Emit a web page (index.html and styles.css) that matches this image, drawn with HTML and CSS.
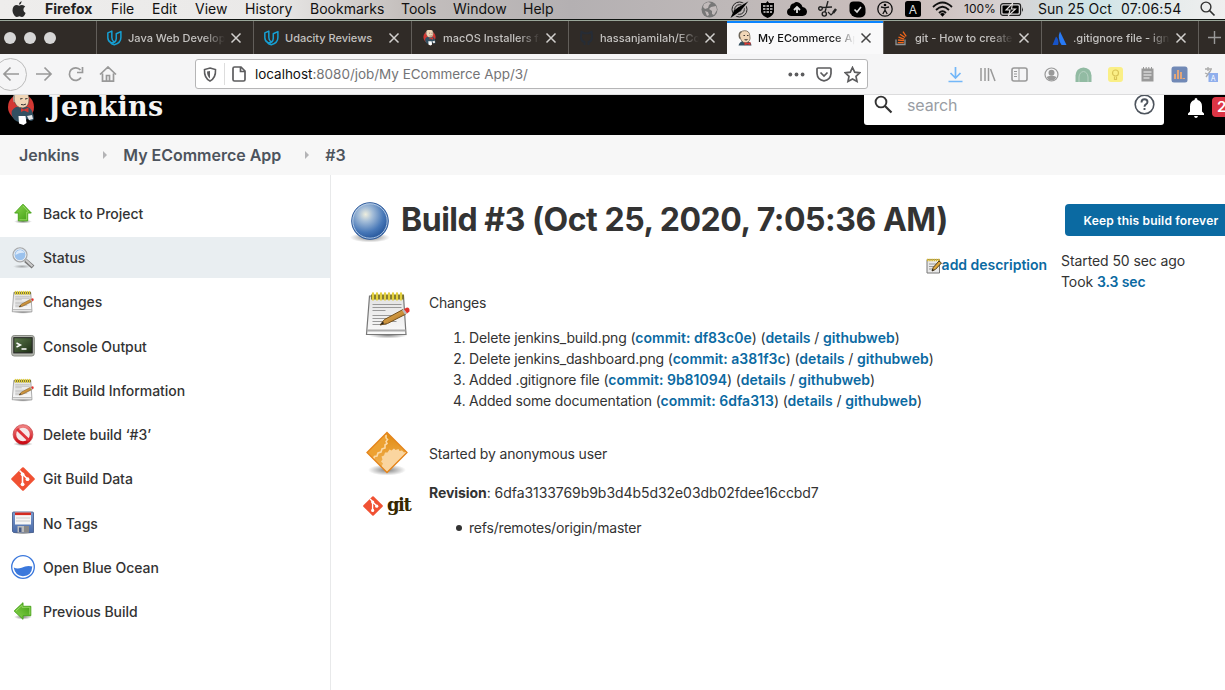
FILE: index.html
```html
<!DOCTYPE html>
<html lang="en">
<head>
<meta charset="utf-8">
<title>My ECommerce App #3 [Jenkins]</title>
<link rel="stylesheet" href="styles.css">
</head>
<body>
<svg class="defs" width="0" height="0">
  <defs>
    <linearGradient id="paper" x1="0" y1="0" x2="0" y2="1"><stop offset="0" stop-color="#e2e2e2"/><stop offset="1" stop-color="#fafafa"/></linearGradient>
    <linearGradient id="wood" x1="0" y1="0" x2="1" y2="1"><stop offset="0" stop-color="#f0c060"/><stop offset="1" stop-color="#a8681c"/></linearGradient>
    <linearGradient id="leaf" x1="0" y1="0" x2="1" y2="1"><stop offset="0" stop-color="#8cd850"/><stop offset="1" stop-color="#3c9a10"/></linearGradient>
    <linearGradient id="amber" x1="0" y1="0" x2="0" y2="1"><stop offset="0" stop-color="#e08a10"/><stop offset="1" stop-color="#f5b85c"/></linearGradient>
    <linearGradient id="disk" x1="0" y1="0" x2="0" y2="1"><stop offset="0" stop-color="#7d9cd0"/><stop offset="1" stop-color="#4a6ba8"/></linearGradient>
    <linearGradient id="term" x1="0" y1="0" x2="1" y2="1"><stop offset="0" stop-color="#5c7a4c"/><stop offset="1" stop-color="#1c2c14"/></linearGradient>
    <linearGradient id="stop" x1="0" y1="0" x2="0" y2="1"><stop offset="0" stop-color="#f08080"/><stop offset="1" stop-color="#cc0a14"/></linearGradient>
    <radialGradient id="ball" cx=".38" cy=".32" r=".65"><stop offset="0" stop-color="#eeeede"/><stop offset=".3" stop-color="#a4bdd8"/><stop offset=".75" stop-color="#4878b8"/><stop offset="1" stop-color="#2c5ca0"/></radialGradient>
    <radialGradient id="shade"><stop offset="0" stop-color="#000" stop-opacity=".5"/><stop offset="1" stop-color="#000" stop-opacity="0"/></radialGradient>
    <symbol id="notepad" viewBox="0 0 48 48">
      <ellipse cx="24" cy="44" rx="20" ry="3.5" fill="url(#shade)"/>
      <path d="M5.500 5h34l2.500 38.500H2.500z" fill="url(#paper)" stroke="#777" stroke-width="1.200"/>
      <path d="M3 39.500h38.500" stroke="#aaa" stroke-width="2"/>
      <path d="M8.500 13.500h29M8.500 16.500h29M8.500 19.500h13M8.500 24.500h29M8.500 27.500h18M8.500 30.500h24M8.500 33.500h14" stroke="#999" stroke-width="1"/>
      <path d="M7 3.500h33v5H7z" fill="#77702f"/>
      <path d="M9 2.500v6M13 2.500v6M17 2.500v6M21 2.500v6M25 2.500v6M29 2.500v6M33 2.500v6M37 2.500v6" stroke="#e3d03c" stroke-width="2.300" stroke-linecap="round"/>
      <path d="M16 34l4.500-5.500L39 18.500l3 4.500-18.500 9.500z" fill="url(#wood)" stroke="#74501c" stroke-width="1"/>
      <path d="M16 34l3-3.500 1 2z" fill="#222"/>
      <path d="M38 19l2-1 3 4.500-2 1.200z" fill="#bbb"/>
      <path d="M40 18l3-1.500q3 0 2.500 4L43 22.500z" fill="#e2322c"/>
    </symbol>
    <symbol id="git" viewBox="0 0 24 24">
      <path d="M11.200.5q.8-.7 1.600 0L23.500 11.200q.7.8 0 1.600L12.800 23.500q-.8.700-1.600 0L.5 12.800q-.7-.8 0-1.600z" fill="#f05133"/>
      <path d="M8.500 3.500l3 3v11M12 7.500l4.200 4.200" stroke="#fff" stroke-width="1.600" fill="none"/>
      <circle cx="11.600" cy="7.300" r="1.900" fill="#fff"/><circle cx="11.600" cy="17.300" r="1.900" fill="#fff"/><circle cx="16.500" cy="12.200" r="1.900" fill="#fff"/>
    </symbol>
    <symbol id="arrow" viewBox="0 0 24 24">
      <path d="M12 2.200l8.300 8.800h-3.600v7.800H7.300V11H3.700z" fill="url(#leaf)" stroke="#4aa51c" stroke-width="1"/>
      <path d="M12 3.900l5.700 6.200h-2v7.700H8.400" fill="none" stroke="#a4e070" stroke-width=".8"/>
    </symbol>
    <symbol id="close" viewBox="0 0 12 12"><path d="M1.500 1.500l9 9m0-9l-9 9" stroke="currentColor" stroke-width="1.500"/></symbol>
    <symbol id="udacity" viewBox="0 0 18 18"><path d="M1.500 3.300L6 1.200v7.300c0 2.300.7 3.700 2.500 4.700-.8 1-2 1.500-3.300 1-2.400-1-3.700-3-3.700-5.500zM11 4.200l5.200-2.400v6.700c0 4.500-2.300 6.800-7.400 8.100-2-.5-3.200-1.100-3.900-2 3.800.6 6.100-2.100 6.100-5.200z" fill="none" stroke="#169fd3" stroke-width="1.700" stroke-linejoin="round"/></symbol>
    <symbol id="butler" viewBox="0 0 16 16">
      <path d="M2 15.500q1-4 4.500-4.500L13 12q2 1 2 3.500z" fill="#335061"/>
      <path d="M3 6Q3 1 8 .7q5 0 5.300 5 1.400 6-4 7.300Q5 13 3 6z" fill="#f0d6b7" stroke="#5d5140" stroke-width=".7"/>
      <path d="M3.300 8.500Q1.500 3 5 1.700" fill="none" stroke="#6c6457" stroke-width="1.300"/>
      <path d="M7 5.500h1.500M10.500 5.500h1.500M8 9.700q2 .8 3-.2" stroke="#423b33" stroke-width="1"/>
      <path d="M8 12l3 1 3-1v3.200l-3-1-3 1z" fill="#d33833"/>
    </symbol>
    <symbol id="butler-full" viewBox="0 0 28 34">
      <circle cx="14" cy="15" r="13" fill="#d33833"/>
      <path d="M5 24q-2-6 4-9h12q5 2 6 12-3 4-6 0l-9 3q-5-1-7-6z" fill="#335061"/>
      <path d="M7 7Q7-2 14-2q7 0 8 8 .5 9-6 10-8 0-9-9z" fill="#f0d6b7" stroke="#4a3d32" stroke-width=".6"/>
      <path d="M7.300 10Q6 5 8 2" fill="none" stroke="#aaa59c" stroke-width="1.500"/>
      <path d="M13 7l2.500-.5M18 7l2.500-.5M14 12.500q3 1 5-.5" fill="none" stroke="#333" stroke-width="1"/>
      <path d="M14 16l3 1.500 4.500-2v5l-4.500-2-3 1.500z" fill="#d33833"/>
      <path d="M11.500 24h7l1 7-3 2-4.500-1.500z" fill="#fff"/>
      <path d="M20 24l5-1 1 4-4 1z" fill="#e8e8ea"/>
    </symbol>
  </defs>
</svg>

<div class="menubar">
  <svg class="apple" width="14" height="17" viewBox="0 0 14 17"><path d="M9.800.2Q9.500 3 7 3.700 7 1 9.800.2zM7.200 4.800Q8.500 4 10 4q2 .1 3.200 1.500-2 1.300-1.800 3.400.2 2.200 2.200 3-1.500 4-3.600 4.100-1-.1-2.600-.7-1.600.7-2.600.7C2.500 15.700.5 12 .5 9.300.6 6 2.500 4.100 4.700 4.100q1 0 2.500.7z" fill="#2c2c2c"/></svg>
  <b>Firefox</b><span>File</span><span>Edit</span><span>View</span><span>History</span><span>Bookmarks</span><span>Tools</span><span>Window</span><span>Help</span>
  <div class="status-icons">
    <svg width="17" height="17" viewBox="0 0 17 17"><circle cx="8.500" cy="8.500" r="8" fill="#777"/><path d="M3 3l4-2 3 1-2 2-1 3-3 1-2-2zM10 6l5-1 1 4-3 5-2-1 0-3-3-2zM4 10l3 1 1 3-2 1z" fill="#c1baba"/></svg>
    <svg width="19" height="17" viewBox="0 0 19 17"><g fill="none" stroke="#222" stroke-width="1"><circle cx="9.500" cy="8.500" r="7.500"/><circle cx="9.500" cy="8.500" r="4.800"/><circle cx="9.500" cy="8.500" r="2"/></g><path d="M17.500 1L2 16" stroke="#bdb8b8" stroke-width="4"/><path d="M18.500 .3L10.500 10l-3.500 2.500-6.500 4.500 3.500-7.500 4-3z" fill="#000"/></svg>
    <svg width="15" height="17" viewBox="0 0 15 17"><path d="M7.500 0l1.500 2h5v9q-1 4-6.500 6Q2 15 1 11V2h5z"/><path d="M3 5h2.500M6.500 5h2.500M10 5h2.500M3 8h2.500M6.500 8h2.500M10 8h2.500M3.500 11h2M6.500 11h2.500M10 11h2" stroke="#d8d4d4" stroke-width="1.700"/></svg>
    <svg width="20" height="15" viewBox="0 0 20 15"><path d="M4 14Q0 13.500 0 10q0-3 3-4 0-4 4-4.700Q9-1 12.500 1 15 2.300 15.500 5q4 .5 4.500 4.500 0 4-4.500 4.500z"/><path d="M10 11V6M7 8l3-3 3 3" stroke="#ddd" stroke-width="1.800" fill="none"/></svg>
    <svg width="19" height="16" viewBox="0 0 19 16"><g fill="none" stroke="#222" stroke-width="1.400"><path d="M4 6.500l10-.5M10 0L7 11"/><circle cx="2.500" cy="7.500" r="1.800"/><circle cx="6.300" cy="13" r="2.100"/><path d="M18 8l-3 4" stroke-width="2.500"/><path d="M10 11l3 3 2-2" stroke-width="1.200"/></g></svg>
    <svg width="17" height="17" viewBox="0 0 17 17"><rect x=".5" y=".5" width="13" height="13" rx="4"/><rect x="3" y="3" width="13.500" height="13.500" rx="5"/><rect x="1" y="1" width="15" height="15" rx="6"/><path d="M5.500 8.500l2.500 2.500 4-5" stroke="#ddd" stroke-width="1.700" fill="none"/></svg>
    <svg width="16" height="16" viewBox="0 0 16 16"><g fill="none" stroke="#111" stroke-width="1.300"><circle cx="8" cy="8" r="7.200"/><path d="M4 6l4 .8L12 6M8 6.500V9l-2.200 4M8 9l2.200 4"/></g><circle cx="8" cy="4" r="1.300"/></svg>
    <svg class="letter-box" width="16" height="16" viewBox="0 0 16 16"><rect width="16" height="16" rx="2.500"/><text x="8" y="12.500" text-anchor="middle">A</text></svg>
    <svg width="21" height="16" viewBox="0 0 21 16"><g fill="none" stroke="#111" stroke-width="1.800"><path d="M1 6Q10.500-3 20 6M4 9Q10.500 2.500 17 9M7 12q3.500-3.500 7 0"/></g><path d="M8 13q2.500-2 5 0l-2.500 2.700z"/></svg>
  </div>
  <span class="percent">100%</span>
  <svg class="battery" width="24" height="13" viewBox="0 0 24 13"><rect x=".6" y=".6" width="20" height="11.800" rx="2.500" fill="none" stroke="#222" stroke-width="1.200"/><rect x="2.500" y="2.500" width="16.200" height="8" rx="1"/><path d="M22 4q1.500 2.500 0 5z"/><path d="M12.500.5L6 7h4L8.500 12.500 15.500 6h-4z" fill="#111" stroke="#e5e1e0" stroke-width="1.100"/></svg>
  <span class="date">Sun 25 Oct</span><span class="clock">07:06:54</span>
  <svg class="spot" width="16" height="16" viewBox="0 0 16 16"><g fill="none" stroke="#333" stroke-width="1.400"><circle cx="6" cy="6" r="4.900"/><path d="M9.500 9.500l5 5" stroke-width="1.700"/></g></svg>
</div>

<div class="tabs">
  <div class="lights"><i></i><i></i><i></i></div>
  <div class="tab"><svg class="fav" viewBox="0 0 18 18"><use href="#udacity"/></svg><span class="fade">Java Web Develop</span><svg class="x"><use href="#close"/></svg></div>
  <div class="tab"><svg class="fav" viewBox="0 0 18 18"><use href="#udacity"/></svg><span>Udacity Reviews</span><svg class="x"><use href="#close"/></svg></div>
  <div class="tab"><svg class="fav"><use href="#butler-full"/></svg><span class="fade">macOS Installers fo</span><svg class="x"><use href="#close"/></svg></div>
  <div class="tab"><svg class="fav" viewBox="0 0 16 16"><path d="M6 15v-3Q2 11 2.500 6L3 2l3 1.200h4L13 2l.5 4q.5 5-3.500 6v3" fill="none" stroke="#262c35" stroke-width="2"/></svg><span class="fade">hassanjamilah/ECo</span><svg class="x"><use href="#close"/></svg></div>
  <div class="tab active"><svg class="fav"><use href="#butler"/></svg><span class="fade">My ECommerce Ap</span><svg class="x"><use href="#close"/></svg></div>
  <div class="tab"><svg class="fav" viewBox="0 0 16 16"><path d="M2.500 9.500v5h9v-5" fill="none" stroke="#8d9294" stroke-width="1.300"/><path d="M4.300 12.600h6M4.500 10l6 .7M5 7.200l5.600 1.900M6.500 4.200l5 3.300M9.500 1.700l3.200 4.600" stroke="#f0661a" stroke-width="1.300"/></svg><span class="fade">git - How to create</span><svg class="x"><use href="#close"/></svg></div>
  <div class="tab"><svg class="fav" viewBox="0 0 16 16"><path d="M4.500 6.500Q8 10 6.500 15H1z" fill="#1753c8"/><path d="M8.500 1.500L15 15h-5Q5.500 8 8.500 1.500z" fill="#287af5"/></svg><span class="fade">.gitignore file - igno</span><svg class="x"><use href="#close"/></svg></div>
  <div class="plus"><svg width="15" height="15" viewBox="0 0 15 15"><path d="M7.500 1v13M1 7.500h13" stroke="#999" stroke-width="1.400"/></svg></div>
</div>

<div class="toolbar">
  <div class="back"><svg width="18" height="16" viewBox="0 0 18 16"><path d="M8.500 1.500L2 8l6.500 6.500M2 8h15" fill="none" stroke="#999" stroke-width="1.700"/></svg></div>
  <svg class="nav-icon forward" viewBox="0 0 18 16"><path d="M9.500 1.500L16 8l-6.500 6.500M16 8H1"/></svg>
  <svg class="nav-icon" viewBox="0 0 18 16"><path d="M14 11.500A6.300 6.300 0 1 1 13.500 4M15.500 1v5.500H10"/></svg>
  <svg class="nav-icon home" viewBox="0 0 18 16"><path d="M1 8.500l8-7.500 8 7.500M3.500 7.500v7.700h11V7.500M7.500 15V9.500h3V15"/></svg>
  <div class="urlbar">
    <svg class="shield" width="14" height="15" viewBox="0 0 14 15"><path d="M7 1l5.500 1.500Q13 11 7 14 1 11 1.500 2.500z" fill="none" stroke="#5c5c5e" stroke-width="1.600"/><path d="M7 4v7.500Q4 9 4 4.500z" fill="#5c5c5e"/></svg>
    <i class="divider"></i>
    <svg class="page" width="14" height="16" viewBox="0 0 14 16"><path d="M2.500 1H9l4 4v8.500q0 1.500-1.500 1.500h-9Q1 15 1 13.500v-11Q1 1 2.500 1zM8.500 1v4.500H13" fill="none" stroke="#5c5c5e" stroke-width="1.700"/></svg>
    <div class="url"><em>localhost</em>:8080/job/My ECommerce App/3/</div>
    <svg class="dots" width="17" height="5" viewBox="0 0 17 5"><g fill="#5c5c5e"><circle cx="2.300" cy="2.500" r="1.900"/><circle cx="8.500" cy="2.500" r="1.900"/><circle cx="14.600" cy="2.500" r="1.900"/></g></svg>
    <svg width="16" height="15" viewBox="0 0 16 15"><path d="M2 1h12q1 0 1 1v4.500Q14.500 13 8 13.800 1.500 13 1 6.500V2q0-1 1-1zM4.500 5.500L8 9l3.500-3.500" fill="none" stroke="#5c5c5e" stroke-width="1.700"/></svg>
    <svg width="17" height="17" viewBox="0 0 17 17"><path d="M8.500 1.500l2.200 4.700 5 .6-3.700 3.500 1 5.100-4.500-2.500L4 15.400l1-5.100-3.700-3.500 5-.6z" fill="none" stroke="#5c5c5e" stroke-width="1.700"/></svg>
  </div>
  <div class="extensions">
    <svg viewBox="0 0 17 17"><path d="M8.500 1v11M3.500 7l5 5 5-5M1.500 15.500h14" fill="none" stroke="#73b7f8" stroke-width="1.700"/></svg>
    <svg viewBox="0 0 17 17"><path d="M2 2v13M6 2v13M9.500 2v13M11.500 3l4.500 12" fill="none" stroke="#999" stroke-width="1.500"/></svg>
    <svg viewBox="0 0 17 17"><rect x="1" y="2" width="15" height="13" rx="2" fill="none" stroke="#999" stroke-width="1.600"/><path d="M8 2v13M3 5.500h3M3 8h3M3 10.500h3" stroke="#999"/></svg>
    <svg viewBox="0 0 17 17"><circle cx="8.500" cy="8.500" r="6.500" fill="none" stroke="#999" stroke-width="1.200"/><circle cx="8.500" cy="6.800" r="3" fill="#999"/><path d="M3.500 11q5-2.500 10 0-2 3.500-5 3.500T3.500 11z" fill="#999"/></svg>
    <svg viewBox="0 0 17 17"><path d="M.5 16V9.500Q1 2 8.500 1.500 16 2 16.500 9.500V16z" fill="#92bba3"/><path d="M4 16v-5q.5-5 4.500-5.500 4 .5 4.500 5.500v5" fill="none" stroke="#b9d3c4"/></svg>
    <svg viewBox="0 0 17 17"><rect x="1" y="1" width="15" height="15" rx="3" fill="#faef86"/><circle cx="8.500" cy="7" r="3" fill="none" stroke="#dac557" stroke-width="1.200"/><path d="M7.500 10.500v3h2v-3" fill="none" stroke="#dac557" stroke-width="1.200"/></svg>
    <svg viewBox="0 0 17 17"><path d="M2.500 2.500h12v13h-12z" fill="#999"/><path d="M4.500 1v3M7.200 1v3M9.800 1v3M12.500 1v3" stroke="#999"/><path d="M4.500 6h8M4.500 9h8M4.500 12h6" stroke="#f5f5f6" stroke-width="1.200"/></svg>
    <svg viewBox="0 0 17 17"><rect x=".5" y=".5" width="16" height="16" rx="2.500" fill="#7189b6"/><path d="M4 13V8M7 13V4M10 13V6" stroke="#e8a876" stroke-width="1.900"/><path d="M11.500 12.500H14" stroke="#e8a876"/></svg>
    <svg class="translate" viewBox="0 0 17 17"><path d="M2 3h7M5 1v4M3 11l5-7M2 7l5 2" stroke="#aaa" stroke-width="1.300"/><rect x="5.500" y="7" width="9.500" height="9" fill="#8faeec"/><text x="10.200" y="14.500" text-anchor="middle">A</text></svg>
  </div>
</div>

<header class="header">
  <svg class="mascot" width="28" height="34"><use href="#butler-full"/></svg>
  <div class="brand">Jenkins</div>
  <div class="search">
    <svg width="19" height="19" viewBox="0 0 19 19"><circle cx="7" cy="7" r="5.400" fill="none" stroke="#333" stroke-width="1.900"/><path d="M11 11l6.500 6.500" stroke="#333" stroke-width="2.200"/></svg>
    <span>search</span>
    <svg class="help" width="21" height="21" viewBox="0 0 21 21"><circle cx="10.500" cy="10.500" r="9.300" fill="none" stroke="#4d545d" stroke-width="1.600"/><path d="M7.500 8.500q0-3.200 3-3.200t3 2.700q0 1.500-1.600 2.400-1.400.8-1.400 2.300M10.500 14v2" fill="none" stroke="#4d545d" stroke-width="1.900"/></svg>
  </div>
  <svg class="bell" width="18" height="20" viewBox="0 0 18 20"><path d="M9 0q1.500 0 1.500 2 4.500 1 4.500 6.500v5l2 2V17H1v-1.500l2-2v-5Q3 3 7.500 2 7.500 0 9 0zM7 18h4q-.5 2-2 2t-2-2z" fill="#fff"/></svg>
  <div class="badge">2</div>
</header>

<nav class="crumbs"><span>Jenkins</span><i></i><span>My ECommerce App</span><i></i><span>#3</span></nav>

<div class="body">
  <aside class="side">
    <div class="task"><svg viewBox="0 0 24 24"><ellipse cx="12" cy="19.500" rx="9" ry="2" fill="url(#shade)"/><use href="#arrow" width="24" height="24"/></svg><span>Back to Project</span></div>
    <div class="task current"><svg viewBox="0 0 24 24"><ellipse cx="11" cy="20.500" rx="9" ry="2" fill="url(#shade)" opacity=".6"/><path d="M14.500 14.500l7.500 6.500" stroke="#777" stroke-width="4.200"/><path d="M15 14.300l6.500 6" stroke="#ccc" stroke-width="2"/><circle cx="9" cy="8.800" r="7" fill="#9bc2ed" stroke="#aaa" stroke-width="1.300"/><circle cx="9" cy="8.800" r="5.900" fill="none" stroke="#eee"/><path d="M4.500 9q0-4.500 5-5 3 .3 4 3-4-1-9 2z" fill="#dceafa"/></svg><span>Status</span></div>
    <div class="task"><svg><use href="#notepad"/></svg><span>Changes</span></div>
    <div class="task"><svg viewBox="0 0 24 24"><rect x=".7" y="1.500" width="22.600" height="20.500" rx="2.500" fill="#b5b8b0" stroke="#888b84"/><rect x="2.800" y="3.700" width="18.400" height="15.200" fill="url(#term)" stroke="#222"/><path d="M5.500 9l4 2-4 2M10.500 15h5" fill="none" stroke="#fff" stroke-width="1.400"/></svg><span>Console Output</span></div>
    <div class="task"><svg><use href="#notepad"/></svg><span>Edit Build Information</span></div>
    <div class="task"><svg viewBox="0 0 24 24"><ellipse cx="12" cy="21" rx="10" ry="2" fill="url(#shade)"/><circle cx="12" cy="11.500" r="8.300" fill="#f5e9e9" stroke="url(#stop)" stroke-width="3"/><path d="M6 6l12 11.500" stroke="#df3238" stroke-width="3"/><circle cx="12" cy="11.500" r="9.900" fill="none" stroke="#b82024" stroke-width=".6"/></svg><span>Delete build ‘#3’</span></div>
    <div class="task"><svg><use href="#git"/></svg><span>Git Build Data</span></div>
    <div class="task"><svg viewBox="0 0 24 24"><ellipse cx="12" cy="22" rx="10" ry="1.500" fill="url(#shade)"/><path d="M1.500 2q0-1 1-1h19q1 0 1 1v19.500h-20l-1-1z" fill="url(#disk)" stroke="#3c5484" stroke-width=".8"/><path d="M4 1.500h16v12H4z" fill="#f6f6f6"/><path d="M4 1.500h16v2.600H4z" fill="#d42a20"/><path d="M5 7h14M5 10h14" stroke="#ccc"/><path d="M6.500 15h11v6.500h-11z" fill="#bbb"/><path d="M13 15h5v6.500h-5z" fill="#888"/><path d="M8 16.500h2.500V21H8z" fill="#465b86"/></svg><span>No Tags</span></div>
    <div class="task"><svg viewBox="0 0 24 24"><circle cx="12" cy="12" r="11.300" fill="#fff" stroke="#3b78dc" stroke-width="1.300"/><path d="M2.700 12.500q3.500 2 8 .3 5-2.600 10.600-1.300-.5 9.300-9.300 9.800-7.800-.5-9.300-8.800z" fill="#3b78dc"/></svg><span>Open Blue Ocean</span></div>
    <div class="task"><svg viewBox="0 0 24 24"><ellipse cx="12" cy="18" rx="9" ry="2.500" fill="url(#shade)"/><use href="#arrow" width="24" height="24" transform="translate(1 0) rotate(-90 12 12)"/></svg><span>Previous Build</span></div>
  </aside>
  <main class="main">
    <div class="title">
      <svg width="42" height="44" viewBox="0 0 42 44"><ellipse cx="21" cy="36.500" rx="20" ry="5" fill="url(#shade)"/><circle cx="21" cy="20" r="18.300" fill="url(#ball)" stroke="#2f5b9c"/><circle cx="21" cy="20" r="17.200" fill="none" stroke="#bcd0e8" stroke-width=".9"/></svg>
      <h1>Build #3 (Oct 25, 2020, 7:05:36 AM)</h1>
      <button class="keep">Keep this build forever</button>
    </div>
    <div class="meta">
      <div class="desc"><svg width="16" height="16" viewBox="0 0 16 16"><path d="M1 1.500h12.500V15H1z" fill="#e9e9e9" stroke="#777"/><path d="M1 2h13" stroke="#d8b82c" stroke-width="2.400" stroke-dasharray="1.500 .7"/><path d="M3 6h7M3 8.500h5M3 11h3" stroke="#999"/><path d="M6 13l1.200-3.500L13 3l2.500 2-6.200 6.500z" fill="#e0a83c" stroke="#4c3a18"/><path d="M6 13l.6-2 1.400 1z" fill="#222"/></svg><a>add description</a></div>
      <div class="timing"><p class="started">Started 50 sec ago</p><p class="took">Took <a>3.3 sec</a></p></div>
    </div>
    <section class="changes">
      <svg width="48" height="48"><use href="#notepad"/></svg>
      <div>
        <p class="heading">Changes</p>
        <ol>
          <li>Delete jenkins_build.png (<a>commit: df83c0e</a>) (<a>details</a> / <a>githubweb</a>)</li>
          <li>Delete jenkins_dashboard.png (<a>commit: a381f3c</a>) (<a>details</a> / <a>githubweb</a>)</li>
          <li>Added .gitignore file (<a>commit: 9b81094</a>) (<a>details</a> / <a>githubweb</a>)</li>
          <li>Added some documentation (<a>commit: 6dfa313</a>) (<a>details</a> / <a>githubweb</a>)</li>
        </ol>
      </div>
    </section>
    <section class="cause">
      <svg width="48" height="48" viewBox="0 0 48 48"><ellipse cx="24" cy="40" rx="19" ry="5.500" fill="url(#shade)"/><path d="M24 2.500L44 22.500 24 42.500 4 22.500z" fill="url(#amber)"/><path d="M24 3v4l-2 1 1 2-1.500 2 1 2-2 2 0 2-3 1-1 3-3 1-1.500 3-3 1-2-3L4.500 22.500z" fill="#eda131"/><path d="M24 42l-5.500-5.500 1.500-3-2-2 1.500-2-1-3 2.500-1 1-3 2.500 0 2-3 2 1 2.500-2 1.500 1.500 3-1 1 2 2.500-.5 2 2 1.500-.5L43.500 22.500z" fill="#fad59f"/><path d="M23 5v3l1.500 1.500-1.500 2 1 2-2 1.500 0 3-3 1-1 3-3 1-1 3-2.500.5-1 2.500" fill="none" stroke="#fbd9a6" stroke-width="1.600"/><path d="M24 2.500L44 22.500 24 42.500 4 22.500z" fill="none" stroke="#e5841a" stroke-width="1.300"/></svg>
      <p class="by">Started by anonymous user</p>
    </section>
    <section class="revision">
      <div class="gitlogo"><svg width="20" height="20"><use href="#git"/></svg><b>git</b></div>
      <div><p class="rev"><b>Revision</b>: 6dfa3133769b9b3d4b5d32e03db02fdee16ccbd7</p><ul><li class="ref">refs/remotes/origin/master</li></ul></div>
    </section>
  </main>
</div>
</body>
</html>
```
FILE: styles.css
```css
* { box-sizing: border-box; }
body { margin: 0; width: 1225px; height: 690px; overflow: hidden; background: #fff; color: #333; font: 14px/21px Inter, "Liberation Sans", sans-serif; }
.defs { position: absolute; }
p, h1, ol, ul { margin: 0; }
svg { flex: none; }

.menubar { height: 21px; padding: 0 0 3px 12px; display: grid; grid-template-columns: 33px 66px 41px 43px 50px 65px 91px 52px 70px 178px 263px 36px 38px 83px 79px 16px; align-items: center; background: linear-gradient(90deg, #eeedec 0, #eae9e8 270px, #c5c0be 400px, #b4b0b2 570px, #beb8b8 730px, #cdbfbd 920px, #d6d0d1 1000px, #cfe4e7 1090px, #e8ecec 1180px, #efefef); border-bottom: 1px solid #9aa79a; box-shadow: inset 0 -1px #101512; color: #111; white-space: nowrap; line-height: 18px; }
.menubar b { color: #222; }
.clock { letter-spacing: .15px; }
.status-icons { display: flex; align-items: center; justify-content: space-between; width: 252px; }
.letter-box text { font: 12px Inter, sans-serif; fill: #ddd; }
.percent { font-size: 12px; }

.tabs { height: 33px; display: grid; grid-template-columns: 96px 157px 158px 157px 159px 156px 158px 157px 27px; background: #302b27; }
.lights { display: flex; align-items: center; gap: 8px; padding-left: 4px; }
.lights i { width: 12px; height: 12px; border-radius: 50%; background: #d6d6d6; }
.tab { min-width: 0; display: flex; align-items: center; padding: 0 11px 0 9px; border-left: 1px solid #625e5a; color: #c4c2c0; font-size: 11px; font-weight: 500; white-space: nowrap; }
.tab .fav { width: 17px; height: 16px; margin-right: 5px; }
.tab span { flex: 1; min-width: 0; margin-right: 5px; line-height: 18px; }
.tab .x { width: 12px; height: 12px; color: #d2d0ce; }
.fade { -webkit-mask-image: linear-gradient(90deg, #000 78%, transparent 100%); mask-image: linear-gradient(90deg, #000 78%, transparent 100%); }
.tab.active { background: #f9f9fa; border-left: 0; border-top: 2px solid #0a84ff; padding-bottom: 2px; color: #111; }
.active .x { color: #444; }
.plus { display: flex; align-items: center; padding-left: 8px; border-left: 1px solid #625e5a; }

.toolbar { height: 41px; display: flex; align-items: center; background: #f5f5f6; border-bottom: 1px solid #dcdcdd; }
.back { width: 33px; height: 33px; margin-left: -6px; border: 1px solid #bcbcbc; border-radius: 50%; display: flex; align-items: center; padding-left: 7px; }
.nav-icon { width: 18px; height: 16px; margin-left: 14px; fill: none; stroke: #999; stroke-width: 1.7; }
.forward { margin-left: 8px; }
.urlbar { width: 673px; height: 30px; margin-left: 78px; padding: 0 6px 0 7px; display: flex; align-items: center; border: 1px solid #b5b5b6; border-radius: 3px; background: #fff; }
.divider { width: 1px; height: 22px; margin: 0 7px 0 7px; background: #ddd; }
.page { margin-right: 9px; }
.url { flex: 1; color: #747476; font-size: 13.5px; letter-spacing: -.03px; }
.url em { color: #111; font-style: normal; }
.dots { margin-right: 11px; }
.dots + svg { margin-right: 12px; }
.extensions { width: 273px; margin-left: 79px; display: flex; justify-content: space-between; }
.extensions svg { width: 17px; height: 17px; }
.translate text { font: 7px Inter, sans-serif; fill: #fff; }

.header { height: 40px; display: flex; align-items: flex-start; background: #000; overflow: hidden; }
.header > * { flex: none; }
.mascot { margin: -3px 0 0 7px; }
.brand { width: 816px; margin: -7px 0 0 13px; color: #f4f4f4; font: bold 27px/38px "DejaVu Serif", serif; letter-spacing: .3px; }
.search { width: 300px; height: 30px; padding: 0 9px 0 10px; display: flex; background: #fff; border-radius: 0 0 3px 3px; color: #999da3; font-size: 16px; }
.search span { flex: 1; margin-left: 14px; letter-spacing: -.15px; }
.help { margin-top: -1px; }
.bell { margin: 3px 0 0 23px; }
.badge { width: 30px; height: 20px; margin: 2px 0 0 7px; padding-left: 5px; border-radius: 4px; background: #dc3545; color: #fff; font-size: 15px; font-weight: 600; line-height: 20px; }

.crumbs { height: 40px; padding-left: 19px; display: flex; align-items: center; background: #f7f7f7; color: #4d545d; font-size: 16px; font-weight: 600; letter-spacing: -.02px; }
.crumbs i { margin: 0 16px 0 24px; border: 4px solid transparent; border-left-color: #b4b4b6; border-right: 0; }

.body { height: 515px; display: flex; }
.side { width: 331px; padding-top: 18px; border-right: 1px solid #e8e9ea; display: flex; flex-direction: column; gap: 3.23px; }
.task { height: 41px; padding-left: 11px; display: flex; align-items: center; gap: 8px; font-weight: 500; letter-spacing: -.04px; }
.task svg { width: 24px; height: 24px; }
.current { background: #e9eef1; }
.main { width: 894px; padding: 20px 0 0 18px; letter-spacing: -.085px; }
.title { height: 55px; display: flex; align-items: flex-start; }
.title svg { margin: 6px 0 0 0; }
h1 { width: 665px; margin-left: 10px; font-size: 32px; line-height: 49px; font-weight: 700; letter-spacing: -.47px; white-space: nowrap; }
.keep { width: 172px; height: 32px; margin: 9px -13px 0 -1px; padding: 0; border: 0; border-radius: 4px; background: #0b6aa2; color: #fff; font: 600 12px Inter, sans-serif; letter-spacing: .19px; white-space: nowrap; flex: none; }
a { color: #0b6aa2; font-weight: 600; }
.meta { height: 36px; display: flex; }
.desc { width: 712px; padding: 4px 14px 0 0; display: flex; justify-content: flex-end; letter-spacing: -.02px; }
.desc svg { margin-top: 4px; }
.changes, .cause, .revision { display: grid; grid-template-columns: 48px 1fr; column-gap: 18px; margin-left: 14px; }
.changes { height: 143px; }
.changes svg { margin: 5px 0 0 1px; }
.heading { padding-top: 6px; margin-bottom: 14px; letter-spacing: -.25px; }
ol, ul { padding-left: 40px; }
ol li { letter-spacing: -.16px; }
ol a { letter-spacing: .01px; }
.cause { height: 53px; }
.cause svg { margin-top: 1px; }
.by { padding-top: 14px; letter-spacing: -.16px; }
.gitlogo { display: flex; gap: 4px; align-items: center; height: 47px; color: #362701; }
.gitlogo b { margin-top: -2px; font: bold 18px/24px "DejaVu Serif", serif; letter-spacing: -1.5px; }
.rev { margin-bottom: 14px; letter-spacing: -.06px; }
.ref { letter-spacing: -.19px; list-style: none; }
.ref::before { content: ""; display: inline-block; width: 6px; height: 6px; margin: 0 7px 2px -13px; border-radius: 50%; background: #333; vertical-align: middle; }
li, p { white-space: nowrap; }
```
